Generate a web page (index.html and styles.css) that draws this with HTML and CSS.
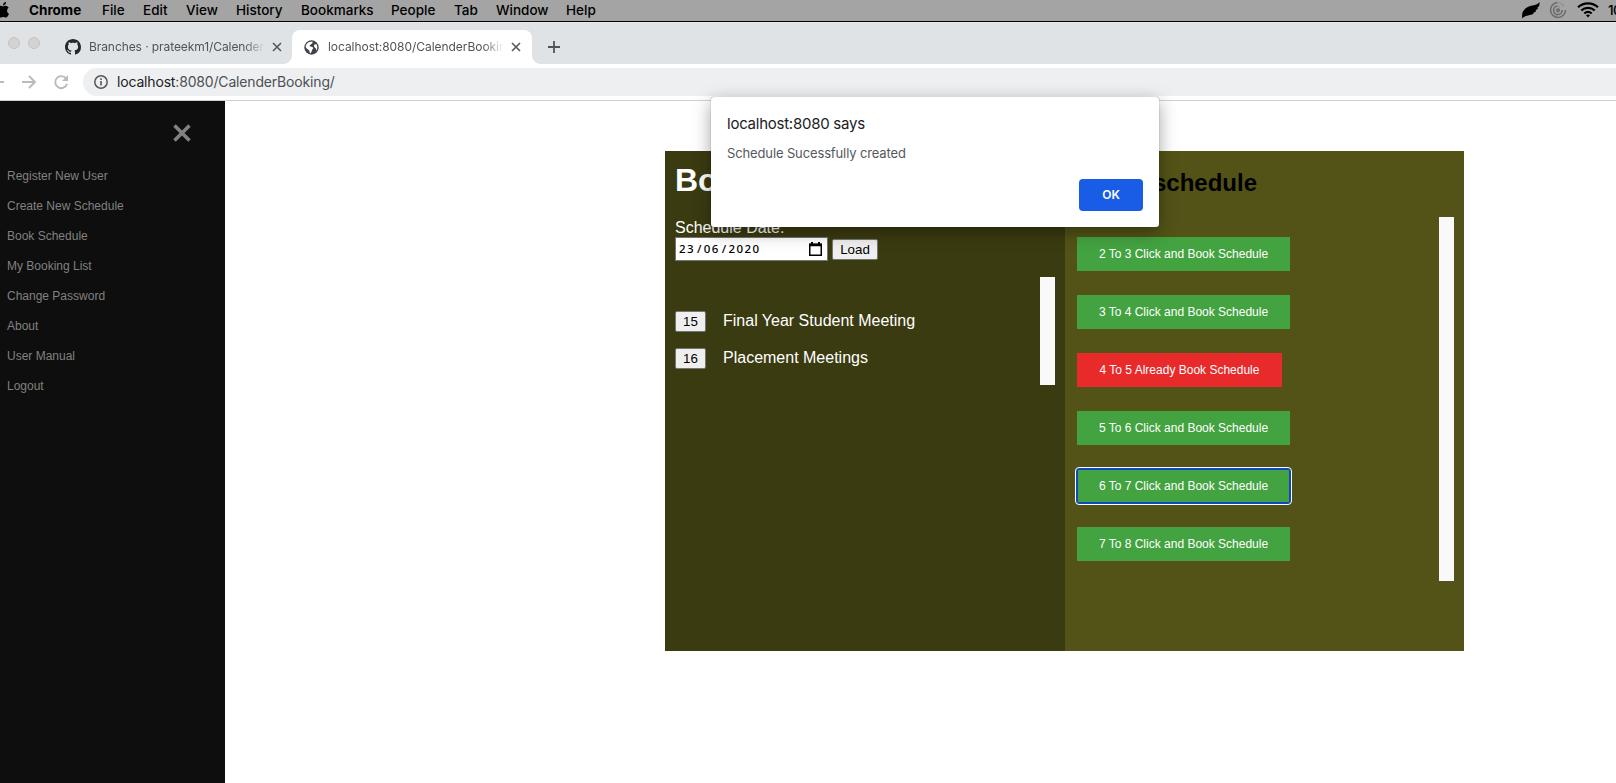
FILE: index.html
```html
<!DOCTYPE html>
<html lang="en">
<head>
<meta charset="utf-8">
<title>CalenderBooking</title>
<link rel="stylesheet" href="styles.css">
</head>
<body>
<div class="menubar">
  <svg class="apple" width="18" height="18" viewBox="0 0 18 18"><path d="M9.2 5.3C8.400 5.300 7.600 4.700 6.400 4.700C4.500 4.700 2.700 6.200 2.700 9.200C2.700 12.600 5 16.500 6.800 16.500C7.700 16.500 8.200 15.900 9.300 15.900C10.400 15.900 10.800 16.500 11.800 16.500C13.200 16.500 14.500 14.300 15 12.700C12.600 11.600 12.500 8.100 14.700 6.700C14 5.500 12.800 4.700 11.600 4.700C10.600 4.700 9.900 5.300 9.200 5.300zM9 4.400C9 2.500 10.400 1.100 12 1C12.200 2.900 10.600 4.500 9 4.400z"/></svg>
  <span class="m-chrome">Chrome</span><span class="m-file">File</span><span class="m-edit">Edit</span><span class="m-view">View</span><span class="m-history">History</span><span class="m-bookmarks">Bookmarks</span><span class="m-people">People</span><span class="m-tab">Tab</span><span class="m-window">Window</span><span class="m-help">Help</span>
  <div class="status">
    <svg class="feather" width="18" height="18" viewBox="0 0 18 18"><path d="M0 17.500L.3 12C1.500 8 6 5.300 10.500 4.500C14 3.900 16 3 17.700 1L17.200 5L15.500 6.500L16 7.500L13.500 9.500L14 10.500L11 12L11.500 13L6 14.500C3.500 15 2 15.500 0 17.500z"/></svg>
    <svg class="swirl" width="18" height="18" viewBox="0 0 18 18" fill="none" stroke="#6c6c6c" stroke-width="1.600"><path d="M8.500 1.500A7.500 7.500 0 1 0 16.500 9"/><path d="M8.500 5A4.300 4.300 0 1 0 13.200 9"/><path d="M9.500 1.800C12 2 14 3.300 15 5.500M9 5.200L11 6M9 8.300L10.500 9.300" opacity=".3"/><circle cx="9" cy="9.300" r="1.300"/></svg>
    <svg class="wifi" width="22" height="16" viewBox="0 0 22 16" fill="none" stroke="#000" stroke-width="2.200"><path d="M1 5.300C6.500 0 15.500 0 21 5.300"/><path d="M4.300 8.500C8 5 14 5 17.700 8.500"/><path d="M7.300 11.500C9.500 9.500 12.500 9.500 14.700 11.500"/><path d="M9 13.200Q11 11.700 13 13.200L11 15.500z" fill="#000" stroke="none"/></svg>
    <span class="clock">10</span>
  </div>
</div>
<div class="tabstrip">
  <i class="light"></i><i class="light"></i>
  <div class="tab first">
    <svg width="16" height="16" viewBox="0 0 16 16" fill="#24292e"><path d="M8 0C3.580 0 0 3.580 0 8c0 3.540 2.290 6.530 5.470 7.590.4.070.55-.17.55-.38 0-.19-.01-.82-.01-1.490-2.010.37-2.530-.49-2.690-.94-.09-.23-.48-.94-.82-1.130-.28-.15-.68-.52-.01-.53.63-.01 1.080.58 1.230.82.72 1.210 1.870.87 2.330.66.070-.52.28-.87.51-1.070-1.780-.2-3.640-.89-3.640-3.950 0-.87.31-1.590.82-2.150-.08-.2-.36-1.020.08-2.120 0 0 .67-.21 2.200.82.64-.18 1.320-.27 2-.27s1.360.09 2 .27c1.530-1.040 2.200-.82 2.200-.82.44 1.100.16 1.920.08 2.120.51.560.82 1.270.82 2.150 0 3.070-1.870 3.750-3.650 3.950.29.250.54.730.54 1.480 0 1.070-.01 1.930-.01 2.200 0 .21.15.46.55.38A8.010 8.010 0 0 0 16 8c0-4.420-3.580-8-8-8z"/></svg>
    <span class="tab-title">Branches · prateekm1/Calender</span>
    <svg class="x" width="10" height="10" viewBox="0 0 10 10"><path d="M1 1L9 9M9 1L1 9"/></svg>
  </div>
  <div class="tab active">
    <svg width="15" height="15" viewBox="0 0 15 15"><circle cx="7.500" cy="7.500" r="7.200" fill="#3f4246"/><path d="M8.300 1.500C9 3 8.300 3.700 7.200 4.100C6.800 5.200 5.800 4.800 5.600 5.900C6.500 6.900 8.300 6.200 9 7.500C9.500 8.800 8.300 9.200 8 10.300C7.700 11.500 7 13 6 13.600L5.500 11.500C5.700 9.700 3.300 9.800 1.700 7.200C1.600 4.200 4 1.700 8.300 1.500z" fill="#fff"/><path d="M10 5.300C10.500 3.900 11.700 4.300 12.500 4.300C13.500 6 13.700 8.500 12.500 10.500C11.800 9.800 12.600 8.500 11.300 7.900C10.500 7.500 9.800 6.500 10 5.300z" fill="#fff"/></svg>
    <span class="tab-title">localhost:8080/CalenderBookin</span>
    <svg class="x" width="10" height="10" viewBox="0 0 10 10"><path d="M1 1L9 9M9 1L1 9"/></svg>
  </div>
  <svg class="plus" width="12" height="12" viewBox="0 0 12 12"><path d="M6 0V12M0 6H12"/></svg>
</div>
<div class="toolbar">
  <svg class="nav" width="72" height="16" viewBox="0 0 72 16" fill="none" stroke="#b9bbbd" stroke-width="1.900"><path d="M0 8H4M22 8H35M29 2L35 8L29 14"/><path d="M66 4.500A6 6 0 1 0 67 9.800"/><path d="M68 1V7H62z" fill="#b9bbbd" stroke="none"/></svg>
  <div class="omnibox">
    <svg width="14" height="14" viewBox="0 0 14 14" fill="none" stroke="#55585c" stroke-width="1.500"><circle cx="7" cy="7" r="6.200"/><path d="M7 6V10.500M7 3.300V4.900" stroke-width="1.600"/></svg>
    <span class="url"><b>localhost</b>:8080/CalenderBooking/</span>
  </div>
</div>
<div class="page">
  <nav class="sidebar">
    <svg class="close" width="18" height="18" viewBox="0 0 18 18"><path d="M1.500 1.500L16.500 16.500M16.500 1.500L1.500 16.500"/></svg>
    <a>Register New User</a><a>Create New Schedule</a><a>Book Schedule</a><a>My Booking List</a><a>Change Password</a><a>About</a><a>User Manual</a><a>Logout</a>
  </nav>
  <main class="content">
    <section class="panel left">
      <h1>Book</h1>
      <div class="label">Schedule Date:</div>
      <div class="date-row">
        <div class="date"><span>23<i>/</i>06<i>/</i>2020</span><svg width="13" height="14" viewBox="0 0 13 14"><path d="M.75 2.500H12.250V13.250H.75z" fill="none" stroke="#000" stroke-width="1.500"/><path d="M0 1.500H13V4.300H0zM2 0H4V2H2zM9 0H11V2H9z"/></svg></div>
        <button class="native load">Load</button>
      </div>
      <div class="meetings">
        <div class="meeting"><button class="native">15</button><span>Final Year Student Meeting</span></div>
        <div class="meeting"><button class="native">16</button><span>Placement Meetings</span></div>
      </div>
    </section>
    <section class="panel right">
      <h2>schedule</h2>
      <div class="slots">
        <button class="slot">2 To 3 Click and Book Schedule</button>
        <button class="slot">3 To 4 Click and Book Schedule</button>
        <button class="slot taken">4 To 5 Already Book Schedule</button>
        <button class="slot">5 To 6 Click and Book Schedule</button>
        <button class="slot focused">6 To 7 Click and Book Schedule</button>
        <button class="slot">7 To 8 Click and Book Schedule</button>
      </div>
    </section>
  </main>
</div>
<div class="dialog">
  <div class="dialog-title">localhost:8080 says</div>
  <div class="dialog-text">Schedule Sucessfully created</div>
  <button class="ok">OK</button>
</div>
</body>
</html>
```
FILE: styles.css
```css
* { box-sizing: border-box; }
body { margin: 0; width: 1616px; height: 783px; overflow: hidden; background: #fff; font-family: "Liberation Sans", Arial, sans-serif; position: relative; }
button { font-family: inherit; margin: 0; }
svg { flex: none; display: block; }

.menubar { height: 22px; background: #a4a4a4; border-bottom: 1px solid #000; display: flex; align-items: center; padding-bottom: 1px; font: 500 13.5px/20px Inter, sans-serif; color: #000; white-space: nowrap; overflow: hidden; }
.menubar > span { flex: none; }
.apple { margin-left: -6px; margin-right: 17px; }
.m-chrome { width: 73px; font-weight: 700; }
.m-file { width: 41px; }
.m-edit { width: 43px; }
.m-view { width: 50px; }
.m-history { width: 65px; }
.m-bookmarks { width: 90px; }
.m-people { width: 63px; }
.m-tab { width: 42px; }
.m-window { width: 70px; }
.m-help { width: 30px; }
.status { margin-left: auto; width: 94px; flex: none; display: flex; align-items: center; }
.swirl { margin-left: 9px; }
.wifi { margin-left: 10px; }
.clock { margin-left: 9px; letter-spacing: -.5px; }

.tabstrip { height: 42px; background: #dfe3e6; display: flex; position: relative; border-top: 1px solid #e9ebee; }
.light { width: 12px; height: 12px; border-radius: 50%; background: #d3d3d3; border: 1px solid #c3c3c3; margin: 14px 0 0 8px; }
.tab { height: 34px; margin-top: 7px; display: flex; align-items: center; font: 12px/16px Inter, sans-serif; color: #505357; }
.first { margin-left: 25px; width: 227px; }
.tab-title { margin-left: 8px; width: 176px; overflow: hidden; white-space: nowrap; letter-spacing: -.08px; mask-image: linear-gradient(90deg, #000 88%, transparent); }
.x { stroke: #55585c; stroke-width: 1.6; margin-left: 7px; }
.active { background: #fff; width: 240px; border-radius: 8px 8px 0 0; padding-left: 12px; position: relative; }
.active::before, .active::after { content: ""; position: absolute; bottom: 0; width: 8px; height: 8px; }
.active::before { left: -8px; background: radial-gradient(circle at 0 0, transparent 7.5px, #fff 8px); }
.active::after { right: -8px; background: radial-gradient(circle at 100% 0, transparent 7.5px, #fff 8px); }
.active .tab-title { margin-left: 9px; width: 176px; letter-spacing: -.05px; }
.plus { stroke: #505357; stroke-width: 1.8; margin: 18px 0 0 16px; }

.toolbar { height: 37px; border-bottom: 1px solid #d0d1d6; display: flex; padding-top: 4px; }
.nav { margin-top: 6px; }
.omnibox { margin-left: 11px; flex: 1; height: 28px; border-radius: 14px 0 0 14px; background: #eeeff1; display: flex; align-items: center; padding-left: 11px; }
.url { margin-left: 9px; font: 14px/20px Inter, sans-serif; letter-spacing: -.17px; color: #4d5054; }
.url b { font-weight: 400; color: #202124; }

.page { display: flex; height: 682px; }
.sidebar { width: 225px; background: #0e0e0e; color: #818181; font-size: 12px; display: flex; flex-direction: column; padding: 23px 0 0 7px; }
.close { margin: 0 0 24px 166px; stroke: #818181; stroke-width: 3.6; }
.sidebar a { height: 30px; line-height: 20px; }
.content { margin: 50px 0 0 440px; width: 799px; height: 500px; display: flex; }
.panel { height: 500px; padding: 10px; overflow: hidden; }
.left { width: 400px; background: #3b3b11; color: #fff; }
.right { width: 399px; background: #535317; }
h1 { margin: 1px 0 0; font-size: 32px; line-height: 37px; }
.label { margin-top: 20px; font-size: 16px; line-height: 18px; }
.date-row { display: flex; align-items: flex-start; }
.date { width: 153px; height: 24px; background: #fff; border: 1px solid #767676; color: #000; font: 500 11.5px/22px "Noto Sans", sans-serif; display: flex; align-items: center; justify-content: space-between; padding: 0 5px 0 3px; letter-spacing: 1.4px; }
.date i { font-style: normal; margin: 0 1px 0 2px; }
.native { background: #efefef; border: 1px solid #767676; border-radius: 2px; color: #000; font-size: 13.33px; line-height: 18px; height: 21px; width: 31px; padding: 0; }
.load { width: 46px; margin: 2px 0 0 4px; }
.meetings { margin-top: 16px; height: 108px; border-right: 15px solid #f9f9f9; padding-top: 34px; display: flex; flex-direction: column; gap: 16px; font-size: 16px; }
.meeting { display: flex; }
.meeting span { margin-left: 17px; line-height: 20px; }
h2 { margin: 8px 0 0; width: 182px; text-align: right; font-size: 24px; line-height: 28px; color: #000; }
.slots { margin-top: 20px; height: 364px; border-right: 15px solid #f9f9f9; padding: 20px 0 0 2px; display: flex; flex-direction: column; align-items: flex-start; gap: 24px; }
.slot { border: 0; width: 213px; height: 34px; flex: none; padding: 0; background: #43a340; color: #fff; font-size: 12px; white-space: nowrap; }
.taken { width: 205px; background: #e82a2a; }
.focused { outline: 1px solid #fff; outline-offset: 1px; box-shadow: 0 0 0 1px #1048c4, inset 0 0 0 1px #1048c4; border-radius: 2px; }

.dialog { position: absolute; left: 711px; top: 97px; width: 448px; height: 130px; background: #fff; border-radius: 3px; box-shadow: 0 0 1px rgba(0,0,0,.6), 0 5px 18px rgba(0,0,0,.36); padding: 17px 16px 16px; display: flex; flex-direction: column; font-family: Inter, sans-serif; }
.dialog-title { font-size: 15px; line-height: 20px; letter-spacing: -.25px; color: #202124; }
.dialog-text { margin-top: 10px; font-size: 13px; line-height: 18px; letter-spacing: -.13px; color: #55585c; }
.ok { margin: auto 0 0 auto; width: 64px; height: 32px; flex: none; border: 0; border-radius: 4px; background: #195ce5; color: #fff; font: 600 12px Inter, sans-serif; padding: 0 0 2px; }
```
